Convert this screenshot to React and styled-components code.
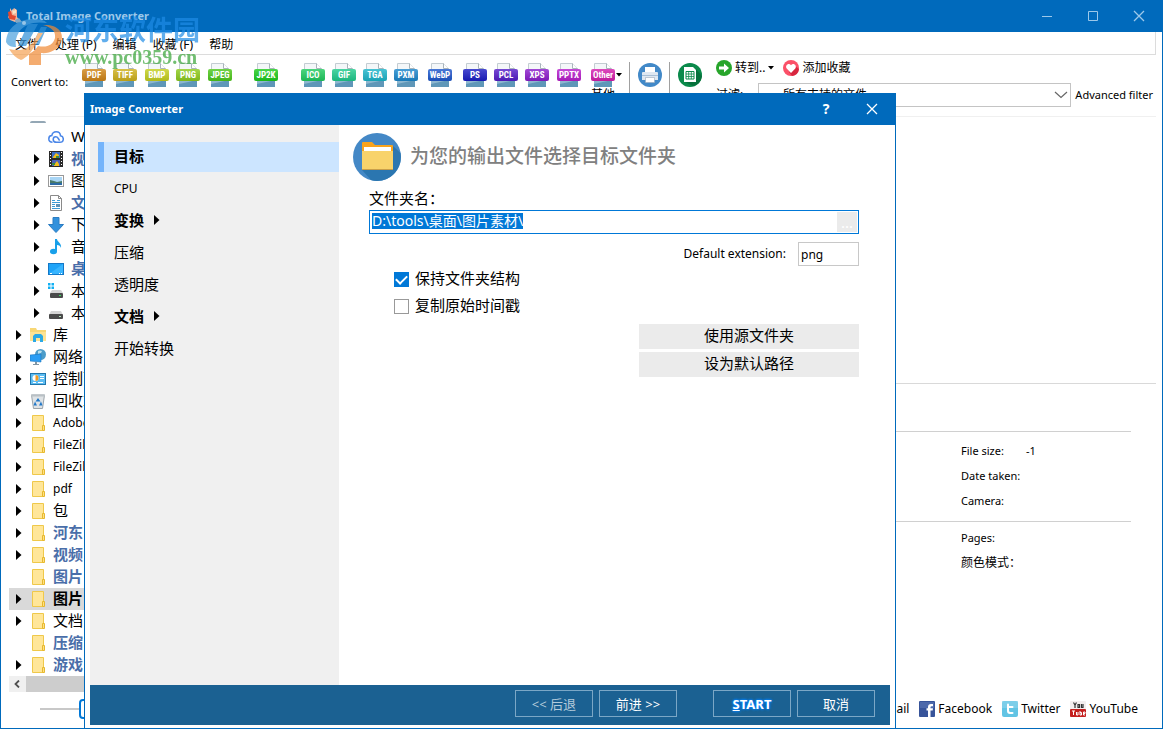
import React, { useEffect, useRef, useState } from "react";
import styled, { createGlobalStyle, css } from "styled-components";

const BLUE = "#006abc";

const FORMATS = [
  { name: "PDF", color: "#d08416", width: 31 },
  { name: "TIFF", color: "#ceb01a", width: 32 },
  { name: "BMP", color: "#c3cf1c", width: 31 },
  { name: "PNG", color: "#8ccb1c", width: 32 },
  { name: "JPEG", color: "#4cc81a", width: 46 },
  { name: "JP2K", color: "#1ccb1c", width: 47 },
  { name: "ICO", color: "#1fca5e", width: 31 },
  { name: "GIF", color: "#1fca8c", width: 31 },
  { name: "TGA", color: "#1bb4c9", width: 31 },
  { name: "PXM", color: "#1b86cb", width: 34 },
  { name: "WebP", color: "#1c56cb", width: 35 },
  { name: "PS", color: "#1a1cc4", width: 31 },
  { name: "PCL", color: "#541cc8", width: 31 },
  { name: "XPS", color: "#8a1ccb", width: 32 },
  { name: "PPTX", color: "#b71ccb", width: 34 },
  { name: "Other", label: "其他", color: "#d41cac", width: 38, menu: true },
];

const TREE = [
  { icon: "computer" },
  { icon: "cloud", text: "WPS网盘", level: 1 },
  { icon: "video", text: "视频", level: 1, arrow: true, marked: true },
  { icon: "picture", text: "图片", level: 1, arrow: true },
  { icon: "document", text: "文档", level: 1, arrow: true, marked: true },
  { icon: "download", text: "下载", level: 1, arrow: true },
  { icon: "music", text: "音乐", level: 1, arrow: true },
  { icon: "desktop", text: "桌面", level: 1, arrow: true, marked: true },
  { icon: "system", text: "本地磁盘", level: 1, arrow: true },
  { icon: "disk", text: "本地磁盘", level: 1, arrow: true },
  { icon: "library", text: "库", arrow: true },
  { icon: "network", text: "网络", arrow: true },
  { icon: "control", text: "控制面板", arrow: true },
  { icon: "recycle", text: "回收站", arrow: true },
  { icon: "folder", text: "Adobe", arrow: true },
  { icon: "folder", text: "FileZilla", arrow: true },
  { icon: "folder", text: "FileZilla", arrow: true },
  { icon: "folder", text: "pdf", arrow: true },
  { icon: "folder", text: "包", arrow: true },
  { icon: "folder", text: "河东", arrow: true, marked: true },
  { icon: "folder", text: "视频", arrow: true, marked: true },
  { icon: "folder", text: "图片", marked: true },
  { icon: "folder", text: "图片", arrow: true, selected: true },
  { icon: "folder", text: "文档", arrow: true },
  { icon: "folder", text: "压缩", marked: true },
  { icon: "folder", text: "游戏", arrow: true, marked: true },
];

const STEPS = [
  { text: "目标", bold: true },
  { text: "CPU", latin: true },
  { text: "变换", bold: true, arrow: true },
  { text: "压缩" },
  { text: "透明度" },
  { text: "文档", bold: true, arrow: true },
  { text: "开始转换" },
];

const drawings = {
  computer: (
    <>
      <rect x="1" y="2" width="14" height="9" fill="#3fa9f5" stroke="#7d8b98" />
      <path d="M0 16q0-2 2-2h12q2 0 2 2z" fill="#94a7b5" />
    </>
  ),
  cloud: (
    <g fill="none" stroke="#4a86e8" strokeWidth="1.5">
      <path d="M4.500 13.300C2.300 13.300.8 11.900.8 9.900c0-1.800 1.300-3.200 3-3.300C4.200 4.200 6 2.700 8.200 2.700c2.400 0 4.200 1.800 4.300 4.100 1.700.3 2.800 1.600 2.800 3.200 0 1.900-1.500 3.300-3.400 3.300H8.600C6.500 13.300 5.200 12 5.200 10.400c0-1.500 1.100-2.600 2.500-2.600 1.300 0 2 .7 2.600 1.700l1.300 2.200" />
    </g>
  ),
  video: (
    <>
      <rect x="1" y="0" width="14" height="16" fill="#2a2a2a" />
      <rect x="4" y="1" width="8" height="6" fill="#3d6fc9" />
      <rect x="4" y="9" width="8" height="6" fill="#4a5fb8" />
      <path d="M5 6l3-4 3 2v3H5zM6 14l3-4 2 3v2H6z" fill="#f2bd1d" />
      <path d="M8 5h3v2H8zM4 12h3v2H4z" fill="#3b8e41" />
      <path d="M2.500 1v15M13.500 1v15" stroke="#fff" strokeDasharray="1 2" />
    </>
  ),
  picture: (
    <>
      <rect x=".5" y="2.500" width="15" height="11" fill="#fff" stroke="#999" />
      <rect x="2" y="4" width="12" height="8" fill="#a8d5f5" />
      <path d="M2 7l4 1 3 1 5-1v4H2z" fill="#48796a" />
      <path d="M2 10h12v2H2z" fill="#2c6aa5" />
    </>
  ),
  document: (
    <>
      <path d="M2.500.5h8l3 3v12h-11z" fill="#fff" stroke="#8a8a8a" />
      <path d="M10.500.5v3h3" fill="none" stroke="#8a8a8a" />
      <path d="M4 5.500h3M4 7.500h8M4 9.500h3M4 11.500h3M4 13.500h8M9 5.500h3" stroke="#3c9bd6" />
      <rect x="8" y="9" width="4" height="3" fill="#5f92b7" />
    </>
  ),
  download: <path d="M5 .5h6v7h4.500L8 15.500.5 7.500H5z" fill="#3291dc" stroke="#2b7cc2" />,
  music: (
    <>
      <path d="M7 0h2c0 3 5 4 4 9-.4-2-2-3-4-3v6H7z" fill="#18a0ea" />
      <ellipse cx="5.500" cy="12.500" rx="3.500" ry="2.800" fill="#18a0ea" />
    </>
  ),
  desktop: (
    <>
      <rect x=".5" y="2.500" width="15" height="11" fill="#1fa4f8" stroke="#1478c7" />
      <path d="M1 13l14-10v10z" fill="#38b5ff" />
      <path d="M2 12.500h2M11 12.500h1M13 12.500h1" stroke="#fff" />
    </>
  ),
  system: (
    <>
      <path d="M0 0h2.500v2.500H0zM3.500 0H6v2.500H3.500zM0 3.500h2.500V6H0zM3.500 3.500H6V6H3.500z" fill="#12b0f3" />
      <path d="M4 7h9l2 3H2z" fill="#d5d5d5" />
      <rect x="2" y="10" width="13" height="5" rx="1" fill="#4b4b4b" />
      <rect x="11" y="12" width="2" height="1" fill="#38e05d" />
    </>
  ),
  disk: (
    <>
      <path d="M3 6h10l2 4H1z" fill="#d5d5d5" />
      <rect x="1" y="9" width="14" height="5" rx="1" fill="#4b4b4b" />
      <rect x="11" y="11" width="2" height="1" fill="#b9e8c1" />
    </>
  ),
  library: (
    <>
      <path d="M0 1h6l1 2h9v11H0z" fill="#f8d775" />
      <path d="M0 5h16v9H0z" fill="#fde394" />
      <path d="M3 15V9l2-2h6l2 2v6h-3v-4H6v4z" fill="#2ca9e5" />
    </>
  ),
  network: (
    <>
      <circle cx="10.500" cy="5.500" r="5.500" fill="#4c9cc9" />
      <path d="M8 2q2-1 4 0l-1 2-3 1z" fill="#b8dfee" />
      <path d="M0 6l11-1v8l-11-1z" fill="#2a9df4" stroke="#1d76bd" strokeWidth=".6" />
      <path d="M5 13h2v2h2v1H3v-1h2z" fill="#8195a3" />
    </>
  ),
  control: (
    <>
      <rect x=".5" y="2.500" width="15" height="11" fill="#5dbdf2" stroke="#2177ad" />
      <circle cx="5.500" cy="7" r="3" fill="#fff" />
      <path d="M5.500 7V4a3 3 0 0 1 0 6z" fill="#f39a21" />
      <path d="M10 5.500h4M10 7.500h4M3 11.500h3M8 11.500h5" stroke="#fff" />
    </>
  ),
  recycle: (
    <>
      <path d="M1.500 2h13l-2 13.500h-9z" fill="#dfe3e6" stroke="#9ca4aa" />
      <path d="M1 1.500h14v2H1z" fill="#b9c0c5" />
      <path d="M8 5l2.500 3.500h-5zM5 8.500l2 4H3.500zM11 8.500l1.500 4H9z" fill="#2278c8" />
    </>
  ),
  folder: (
    <>
      <path d="M2.500.5h11v15h-11z" fill="#ffe699" stroke="#efc84a" />
      <path d="M12.500 10.500h2v5h-2z" fill="#ffe082" stroke="#e6b82f" />
    </>
  ),
};

const TreeIcon = ({ name }) => (
  <svg width="16" height="16" viewBox="0 0 16 16" aria-hidden="true">
    {drawings[name]}
  </svg>
);

const Cross = () => (
  <svg width="12" height="12" viewBox="0 0 12 12" aria-hidden="true">
    <path d="M1 1l10 10M11 1L1 11" stroke="currentColor" strokeWidth="1.300" />
  </svg>
);

const AppLogo = () => (
  <svg width="16" height="16" viewBox="0 0 16 16" aria-hidden="true">
    <path d="M3 0l2 3 2-3 3 2v7l2 3-4 2-5-2-2-3 2-3z" fill="#f3b49a" />
    <path d="M1 4l3-1 1 4 4 1-1 4-6-1z" fill="#e4482f" />
    <path d="M5 1l2 2 2-2v4l-3 1z" fill="#fbe3c4" />
    <path d="M8 12l4-2 3 4-6 1z" fill="#7fa6c4" />
  </svg>
);

const FormatIcon = () => (
  <svg width="24" height="24" viewBox="0 0 24 24" aria-hidden="true">
    <path d="M3.500.5h12l5 5v7h-17z" fill="#f4f7f9" stroke="#c3ccd2" />
    <path d="M15.500.5v5h5" fill="#fff" stroke="#a9b4bb" />
    <path d="M3 16h18v8H3z" fill="#8db6cf" />
    <path d="M3 21l18-4v7H3z" fill="#5f97b8" />
  </svg>
);

const PrinterIcon = () => (
  <svg width="24" height="24" viewBox="0 0 24 24" aria-hidden="true">
    <circle cx="12" cy="12" r="12" fill="#4289c8" />
    <path d="M7 4h10v5H7z" fill="#fff" />
    <path d="M4 10q0-1 1-1h14q1 0 1 1v7H4z" fill="#dfe8f1" />
    <path d="M4 12h16v1H4z" fill="#a9bfd5" />
    <path d="M7.500 14.500h9v5h-9z" fill="#fff" stroke="#9ab" strokeWidth=".6" />
  </svg>
);

const ReportIcon = () => (
  <svg width="24" height="24" viewBox="0 0 24 24" aria-hidden="true">
    <circle cx="12" cy="12" r="12" fill="#0b8a4b" />
    <path d="M18 6l6 7a12 12 0 0 1-9 10l-8-4z" fill="#07713c" />
    <path d="M6 4h9l3 3v12H6z" fill="#fff" />
    <path d="M8 8.500h8v7.500H8z" fill="none" stroke="#0b8a4b" />
    <path d="M8 11h8M8 13.500h8M10.700 9v7M13.300 9v7" stroke="#0b8a4b" strokeWidth=".8" />
  </svg>
);

const GoIcon = () => (
  <svg width="16" height="16" viewBox="0 0 16 16" aria-hidden="true">
    <circle cx="8" cy="8" r="8" fill="#27a52b" />
    <path d="M3 6.500h5V3.500L13 8l-5 4.500v-3H3z" fill="#fff" />
  </svg>
);

const HeartIcon = () => (
  <svg width="16" height="16" viewBox="0 0 16 16" aria-hidden="true">
    <circle cx="8" cy="8" r="8" fill="#fb5068" />
    <path d="M12 6l4 3a8 8 0 0 1-7 7l-3-4z" fill="#d8263f" />
    <path d="M8 13L3.700 8.600C1.600 5.500 5.800 2.300 8 5.300c2.200-3 6.400.2 4.300 3.300z" fill="#fff" />
  </svg>
);

const FolderBadge = () => (
  <svg width="48" height="48" viewBox="0 0 48 48" aria-hidden="true">
    <circle cx="24" cy="24" r="24" fill="#4488c6" />
    <path d="M40 13l7.500 7A24 24 0 0 1 24 48a24 24 0 0 1-6-1L9 37z" fill="#2b76b0" />
    <path d="M9 10q0-1 1-1h9l3 3h17q1 0 1 1v12H9z" fill="#f9a31c" />
    <path d="M11 14h27v5H11z" fill="#fff" />
    <path d="M9 18h31v18H9z" fill="#f8d36b" />
    <path d="M9 36h31v1H9z" fill="#c89f4a" />
  </svg>
);

const FacebookIcon = () => (
  <svg width="16" height="16" viewBox="0 0 16 16" aria-hidden="true">
    <rect width="16" height="16" rx="1" fill="#37549a" />
    <path d="M1 1h14v6H1z" fill="#4d69ab" />
    <path d="M9 16V9.500H7.500V7.300H9V6q0-3 3-3h2v2.200h-1.300q-1.200 0-1.200 1v1.100H14l-.3 2.200h-2.200V16z" fill="#fff" />
  </svg>
);

const TwitterIcon = () => (
  <svg width="16" height="16" viewBox="0 0 16 16" aria-hidden="true">
    <rect width="16" height="16" rx="2" fill="#62c4e4" />
    <path d="M0 0h16v7H0z" fill="#8ed6ec" opacity=".6" />
    <path d="M5 3.500q0-1 1-1t1 1V5h3.500q1 0 1 1t-1 1H7v2.500q0 1.500 1.500 1.500h2q1 0 1 1t-1 1H8q-3 0-3-3z" fill="#fff" />
  </svg>
);

const YoutubeIcon = () => (
  <svg width="16" height="16" viewBox="0 0 16 16" aria-hidden="true">
    <rect width="16" height="16" rx="1" fill="#f3eeee" />
    <path d="M3.500 1.500L5 4l1.500-2.500M5 4v3M8 3.500h1.500v3H8zM11.500 3v3.500H13V3" fill="none" stroke="#333" strokeWidth="1.200" />
    <rect y="8" width="16" height="8" rx="1" fill="#c4201f" />
    <path d="M2 10h3M3.500 10v4M6.500 11v3H8v-3M10 10v4h1.500v-2.500H10M15 14h-1.500v-3H15v1.500h-1.500" fill="none" stroke="#fff" />
  </svg>
);

const SiteLogo = () => (
  <svg width="60" height="50" viewBox="0 0 60 50" aria-hidden="true">
    <path d="M1 27C2 12 14 4 29 4c6 0 10 1 13 4-12-2-23 1-28 9-3 5-4 10-3 15-5 0-8-1-10-5z" fill="#4aa0dd" />
    <path d="M23 9h10L21 31h-8zM36 12h6l-8 18h-7z" fill="#2f8fd6" />
    <path d="M4 34c12 3 20 0 26-10l3-6h5l-9 14c-4 7-8 11-13 13-5-2-9-6-12-11z" fill="#f6a253" />
    <path d="M38 10c14-1 22 7 18 17-3 8-12 12-20 11v12H24V39c4-2 7-5 9-8 9 2 15-1 17-8 1-7-4-11-12-13z" fill="#f08a35" />
    <circle cx="19" cy="8" r="2" fill="#d8ecfa" />
  </svg>
);

const Tree = () => (
  <TreeView>
    {TREE.map((node, i) => (
      <TreeRow key={i} $level={node.level || 0} $marked={node.marked} $selected={node.selected}>
        <Expander>{node.arrow && <RightArrow />}</Expander>
        <TreeIcon name={node.icon} />
        {node.text && <TreeText $latin={/^[A-Za-z]+$/.test(node.text)}>{node.text}</TreeText>}
      </TreeRow>
    ))}
  </TreeView>
);

const RightArrow = () => (
  <svg width="6" height="10" viewBox="0 0 6 10" aria-hidden="true">
    <path d="M0 0l5.500 5L0 10z" fill="#000" />
  </svg>
);

const DownArrow = () => (
  <svg width="6" height="4" viewBox="0 0 6 4" aria-hidden="true">
    <path d="M0 0h6L3 3.500z" fill="#000" />
  </svg>
);

const ConverterDialog = () => {
  const folder = useRef(null);
  const [keep, setKeep] = useState(true);
  const [stamp, setStamp] = useState(false);

  useEffect(() => {
    folder.current.focus();
    folder.current.select();
  }, []);

  return (
    <Dialog role="dialog" aria-labelledby="dialog-title">
      <DialogTitle>
        <h2 id="dialog-title">Image Converter</h2>
        <DialogControl type="button">?</DialogControl>
        <DialogControl type="button" aria-label="Close">
          <Cross />
        </DialogControl>
      </DialogTitle>
      <DialogBody>
        <Steps>
          {STEPS.map((step, i) => (
            <Step key={step.text} type="button" $active={i === 0} $bold={step.bold} $latin={step.latin}>
              {step.text}
              {step.arrow && <RightArrow />}
            </Step>
          ))}
        </Steps>
        <Page>
          <PageHead>
            <FolderBadge />
            <h1>为您的输出文件选择目标文件夹</h1>
          </PageHead>
          <Form>
            <FieldLabel htmlFor="folder">文件夹名：</FieldLabel>
            <PathBox>
              <PathInput id="folder" ref={folder} defaultValue="D:\tools\桌面\图片素材\" spellCheck="false" />
              <Browse type="button">...</Browse>
            </PathBox>
            <ExtensionRow>
              <label htmlFor="extension">Default extension:</label>
              <ExtensionInput id="extension" defaultValue="png" />
            </ExtensionRow>
            <Check>
              <input type="checkbox" checked={keep} onChange={() => setKeep(!keep)} />
              <span>保持文件夹结构</span>
            </Check>
            <Check>
              <input type="checkbox" checked={stamp} onChange={() => setStamp(!stamp)} />
              <span>复制原始时间戳</span>
            </Check>
            <SideButtons>
              <FlatButton type="button">使用源文件夹</FlatButton>
              <FlatButton type="button">设为默认路径</FlatButton>
            </SideButtons>
          </Form>
        </Page>
      </DialogBody>
      <DialogFooter>
        <FooterGroup>
          <FooterButton type="button" $dim>
            &lt;&lt; 后退
          </FooterButton>
          <FooterButton type="button">前进 &gt;&gt;</FooterButton>
        </FooterGroup>
        <FooterGroup>
          <FooterButton type="button" $start>
            <u>S</u>TART
          </FooterButton>
          <FooterButton type="button">取消</FooterButton>
        </FooterGroup>
      </DialogFooter>
    </Dialog>
  );
};

const App = () => {
  const [zoom, setZoom] = useState(36);

  return (
    <>
      <GlobalStyle />
      <Window>
        <TitleBar>
          <AppLogo />
          <AppTitle>Total Image Converter</AppTitle>
          <WindowControl type="button" aria-label="Minimize">
            <svg width="12" height="12" viewBox="0 0 12 12">
              <path d="M1 6.500h10" stroke="currentColor" />
            </svg>
          </WindowControl>
          <WindowControl type="button" aria-label="Maximize">
            <svg width="12" height="12" viewBox="0 0 12 12">
              <path d="M1.500 1.500h9v9h-9z" fill="none" stroke="currentColor" />
            </svg>
          </WindowControl>
          <WindowControl type="button" aria-label="Close">
            <Cross />
          </WindowControl>
        </TitleBar>
        <Content>
          <MenuBar>
            <MenuItem type="button">文件</MenuItem>
            <MenuItem type="button">处理 (P)</MenuItem>
            <MenuItem type="button">编辑</MenuItem>
            <MenuItem type="button">收藏 (F)</MenuItem>
            <MenuItem type="button">帮助</MenuItem>
          </MenuBar>
          <Toolbar>
            <ConvertLabel>Convert to:</ConvertLabel>
            {FORMATS.map((format) => (
              <FormatButton key={format.name} type="button" $width={format.width}>
                <FormatFace>
                  <FormatIcon />
                  <Band $color={format.color}>{format.name}</Band>
                  {format.menu && (
                    <MenuMark>
                      <DownArrow />
                    </MenuMark>
                  )}
                </FormatFace>
                <ToolLabel $latin={!format.label}>{format.label || format.name}</ToolLabel>
              </FormatButton>
            ))}
            <Separator />
            <ToolButton type="button">
              <PrinterIcon />
              <ToolLabel $latin>Print</ToolLabel>
            </ToolButton>
            <Separator />
            <ToolButton type="button">
              <ReportIcon />
              <ToolLabel $latin>Report</ToolLabel>
            </ToolButton>
            <FilterArea>
              <Shortcuts>
                <Shortcut type="button">
                  <GoIcon />
                  转到..
                  <DownArrow />
                </Shortcut>
                <Shortcut type="button">
                  <HeartIcon />
                  添加收藏
                </Shortcut>
              </Shortcuts>
              <FilterRow>
                <FilterLabel htmlFor="filter">过滤:</FilterLabel>
                <FilterBox>
                  <select id="filter">
                    <option>所有支持的文件</option>
                  </select>
                  <svg width="14" height="8" viewBox="0 0 14 8" aria-hidden="true">
                    <path d="M1 1l6 5.500L13 1" fill="none" stroke="#666" strokeWidth="1.200" />
                  </svg>
                </FilterBox>
                <AdvancedButton type="button">Advanced filter</AdvancedButton>
              </FilterRow>
            </FilterArea>
          </Toolbar>
          <Panes>
            <LeftPane>
              <Tree />
              <ScrollBar>
                <button type="button" aria-label="Scroll left">
                  <svg width="7" height="8" viewBox="0 0 7 8">
                    <path d="M5 .5L1.500 4 5 7.500" fill="none" stroke="#505050" strokeWidth="1.800" />
                  </svg>
                </button>
              </ScrollBar>
            </LeftPane>
            <InfoPane>
              <Preview />
              <Info>
                <InfoSection>
                  <dt>File size:</dt>
                  <dd>-1</dd>
                  <dt>Date taken:</dt>
                  <dt>Camera:</dt>
                </InfoSection>
                <InfoSection $tight>
                  <dt>Pages:</dt>
                  <WideTerm>颜色模式：</WideTerm>
                </InfoSection>
              </Info>
            </InfoPane>
          </Panes>
          <StatusBar>
            <ZoomSlider
              type="range"
              aria-label="Thumbnail size"
              value={zoom}
              onChange={(e) => setZoom(Number(e.target.value))}
            />
            <Links>
              <a href="#email">E-mail</a>
              <a href="#facebook">
                <FacebookIcon />
                Facebook
              </a>
              <a href="#twitter">
                <TwitterIcon />
                Twitter
              </a>
              <a href="#youtube">
                <YoutubeIcon />
                YouTube
              </a>
            </Links>
          </StatusBar>
        </Content>
        <ConverterDialog />
        <Watermark>
          <SiteLogo />
          <div>
            <SiteName>河东软件园</SiteName>
            <SiteUrl>www.pc0359.cn</SiteUrl>
          </div>
        </Watermark>
      </Window>
    </>
  );
};

export default App;

const GlobalStyle = createGlobalStyle`
  * {
    box-sizing: border-box;
  }

  body {
    margin: 0;
    background: #fff;
    color: #000;
    font-family: "Noto Sans", "Noto Sans CJK SC", sans-serif;
    font-size: 12px;
    line-height: 16px;
  }

  button, input, select {
    font: inherit;
    color: inherit;
  }

  button {
    padding: 0;
    border: 0;
    background: none;
    white-space: nowrap;
  }

  h1, h2, dl, dt, dd, ul {
    margin: 0;
    padding: 0;
  }

  svg {
    display: block;
    flex: none;
  }
`;

const Window = styled.div`
  position: relative;
  display: flex;
  flex-direction: column;
  height: 100vh;
  overflow: hidden;
  border: 1px solid ${BLUE};
  border-top: 0;
`;

const TitleBar = styled.header`
  display: flex;
  align-items: center;
  height: 32px;
  flex: none;
  padding-left: 6px;
  background: ${BLUE};
  color: #9cc8ea;
`;

const AppTitle = styled.span`
  flex: 1;
  padding-left: 3px;
  font-size: 11px;
  font-weight: 700;
`;

const WindowControl = styled.button`
  display: flex;
  align-items: center;
  justify-content: center;
  width: 46px;
  height: 32px;
`;

const Content = styled.main`
  display: flex;
  flex-direction: column;
  flex: 1;
  min-height: 0;
  padding: 0 6px 0 5px;
`;

const MenuBar = styled.nav`
  display: flex;
  height: 23px;
  flex: none;
  padding: 3px 0 0 1px;
  border: 1px solid #dcdcdc;
  border-width: 0 1px 1px 0;
`;

const MenuItem = styled.button`
  padding: 0 8px;
`;

const Toolbar = styled.div`
  display: flex;
  height: 62px;
  flex: none;
  padding: 8px 3px 0 5px;
  border-bottom: 1px solid #f0f0f0;
`;

const ConvertLabel = styled.span`
  width: 71px;
  flex: none;
  padding-top: 11px;
  font-size: 11px;
`;

const FormatButton = styled.button`
  display: flex;
  flex-direction: column;
  align-items: flex-start;
  flex: none;
  width: ${(p) => p.$width}px;
`;

const FormatFace = styled.span`
  position: relative;
  width: 24px;
  height: 24px;
`;

const Band = styled.span`
  position: absolute;
  top: 6px;
  left: 0;
  width: 24px;
  height: 12px;
  border-radius: 2px;
  background: linear-gradient(rgba(255, 255, 255, 0.2), rgba(0, 0, 0, 0.1)) ${(p) => p.$color};
  color: #fff;
  font-family: "Liberation Sans Narrow", "Roboto Condensed", Roboto, sans-serif;
  font-size: 9px;
  font-weight: 700;
  line-height: 12px;
  text-align: center;
`;

const MenuMark = styled.span`
  position: absolute;
  top: 10px;
  left: 25px;
`;

const ToolLabel = styled.span`
  display: flex;
  justify-content: center;
  width: 24px;
  padding-top: ${(p) => (p.$latin ? 2 : 0)}px;
  font-size: ${(p) => (p.$latin ? 11 : 12)}px;
`;

const Separator = styled.span`
  width: 1px;
  flex: none;
  margin-top: -1px;
  background: #a0a0a0;
`;

const ToolButton = styled.button`
  display: flex;
  flex-direction: column;
  align-items: center;
  width: 39px;
  flex: none;
`;

const FilterArea = styled.div`
  flex: 1;
  min-width: 0;
  margin-top: -7px;
  padding-left: 7px;
`;

const Shortcuts = styled.div`
  display: flex;
  gap: 9px;
  height: 27px;
`;

const Shortcut = styled.button`
  display: flex;
  align-items: center;
  gap: 3px;
  height: 24px;
`;

const FilterRow = styled.div`
  display: flex;
  align-items: center;
`;

const FilterLabel = styled.label`
  width: 42px;
`;

const FilterBox = styled.div`
  position: relative;
  display: flex;
  align-items: center;
  flex: 1;
  height: 24px;
  padding-right: 2px;
  border: 1px solid #c4c4c4;

  select {
    flex: 1;
    height: 22px;
    padding: 0 24px;
    border: 0;
    background: none;
    appearance: none;
  }

  svg {
    pointer-events: none;
  }
`;

const AdvancedButton = styled.button`
  padding-left: 4px;
  font-size: 11px;
`;

const Panes = styled.div`
  display: flex;
  justify-content: space-between;
  flex: 1;
  min-height: 0;
`;

const LeftPane = styled.aside`
  display: flex;
  flex-direction: column;
  width: 240px;
  margin-left: 3px;
  padding-top: 3px;
`;

const TreeView = styled.ul`
  display: flex;
  flex-direction: column;
  justify-content: flex-end;
  flex: 1;
  min-height: 0;
  overflow: hidden;
  list-style: none;
`;

const TreeRow = styled.li`
  display: flex;
  align-items: center;
  height: 22px;
  flex: none;
  padding-left: ${(p) => 7 + p.$level * 18}px;
  white-space: nowrap;

  ${(p) =>
    p.$marked &&
    css`
      color: #4a6ea9;
      font-weight: 700;
    `}

  ${(p) =>
    p.$selected &&
    css`
      background: #d9d9d9;
      font-weight: 700;
    `}
`;

const Expander = styled.span`
  width: 14px;
`;

const TreeText = styled.span`
  padding: 0 0 ${(p) => (p.$latin ? 0 : 2)}px 7px;
  font-size: ${(p) => (p.$latin ? 12 : 15)}px;
`;

const ScrollBar = styled.div`
  display: flex;
  height: 16px;
  flex: none;
  background: #cdcdcd;

  button {
    display: flex;
    align-items: center;
    justify-content: center;
    width: 17px;
    background: #f0f0f0;
  }
`;

const InfoPane = styled.section`
  width: 284px;
`;

const Preview = styled.div`
  height: 267px;
  border-bottom: 1px solid #d9d9d9;
`;

const Info = styled.div`
  padding: 47px 25px 0 0;
`;

const InfoSection = styled.dl`
  display: grid;
  grid-template-columns: 65px 1fr;
  padding: ${(p) => (p.$tight ? 3 : 6)}px 0 8px 89px;
  border-top: 1px solid #d0d0d0;
  font-size: 11px;
  line-height: 25px;

  dt {
    grid-column: 1;
    white-space: nowrap;
  }
`;

const WideTerm = styled.dt`
  font-size: 12px;
`;

const StatusBar = styled.footer`
  display: flex;
  align-items: center;
  justify-content: space-between;
  height: 36px;
  flex: none;
  padding: 0 18px 2px 34px;
`;

const ZoomSlider = styled.input`
  width: 120px;
  height: 20px;
  margin: 0;
  appearance: none;
  background: linear-gradient(#c8c8c8, #c8c8c8) center / 100% 2px no-repeat;

  &::-webkit-slider-thumb {
    appearance: none;
    width: 12px;
    height: 20px;
    border: 2px solid #0078d7;
    border-radius: 4px;
    background: #fff;
  }
`;

const Links = styled.div`
  display: flex;
  gap: 10px;
  font-size: 12px;

  a {
    display: flex;
    align-items: center;
    gap: 3px;
    color: #000;
    text-decoration: none;
  }
`;

const Dialog = styled.section`
  position: absolute;
  top: 93px;
  right: 266px;
  bottom: -1px;
  left: 83px;
  display: flex;
  flex-direction: column;
  padding-bottom: 4px;
  border: 1px solid ${BLUE};
  border-width: 0 1px;
  background: #fff;
`;

const DialogTitle = styled.header`
  display: flex;
  align-items: center;
  height: 32px;
  flex: none;
  padding-left: 5px;
  background: ${BLUE};
  color: #fff;

  h2 {
    flex: 1;
    font-size: 11px;
  }
`;

const DialogControl = styled.button`
  display: flex;
  align-items: center;
  justify-content: center;
  width: 46px;
  height: 32px;
  font-size: 14px;
  font-weight: 700;
`;

const DialogBody = styled.div`
  display: flex;
  flex: 1;
  min-height: 0;
  padding: 0 5px;
`;

const Steps = styled.nav`
  display: flex;
  flex-direction: column;
  gap: 2px;
  width: 249px;
  flex: none;
  padding: 17px 0 0 8px;
  background: #f0f0f0;
`;

const Step = styled.button`
  display: flex;
  align-items: center;
  gap: 10px;
  height: 30px;
  padding: 0 0 ${(p) => (p.$latin ? 0 : 2)}px 10px;
  border-left: 6px solid ${(p) => (p.$active ? "#74b4fb" : "transparent")};
  background: ${(p) => (p.$active ? "#cce5ff" : "none")};
  font-size: ${(p) => (p.$latin ? 12 : 15)}px;
  font-weight: ${(p) => (p.$bold ? 700 : 400)};
`;

const Page = styled.div`
  flex: 1;
  padding: 8px 31px 0 14px;
`;

const PageHead = styled.div`
  display: flex;
  align-items: center;
  gap: 9px;

  h1 {
    padding-bottom: 2px;
    color: #808080;
    font-size: 19px;
    font-weight: 500;
    line-height: 24px;
  }
`;

const Form = styled.form`
  display: flex;
  flex-direction: column;
  padding: 8px 0 0 16px;
  font-size: 15px;
`;

const FieldLabel = styled.label`
  height: 21px;
  line-height: 19px;
`;

const PathBox = styled.div`
  display: flex;
  height: 24px;
  padding: 1px;
  border: 1px solid #0078d7;
`;

const PathInput = styled.input`
  flex: 1;
  min-width: 0;
  padding: 0 1px 2px;
  border: 0;
  outline: 0;
  font-size: 14px;

  &::selection {
    background: #0078d7;
    color: #fff;
  }
`;

const Browse = styled.button`
  width: 20px;
  background: #ebebeb;
  color: #fff;
`;

const ExtensionRow = styled.div`
  display: flex;
  align-items: center;
  justify-content: flex-end;
  gap: 12px;
  padding-top: 8px;
  font-size: 12px;
`;

const ExtensionInput = styled.input`
  width: 61px;
  height: 24px;
  padding: 0 2px;
  border: 1px solid #c8c8c8;
`;

const Check = styled.label`
  display: flex;
  align-items: center;
  align-self: flex-start;
  gap: 6px;
  height: 27px;
  padding-left: 25px;

  span {
    padding-bottom: 4px;
  }

  input {
    width: 15px;
    height: 15px;
    margin: 0;
    appearance: none;
    border: 1px solid #999;
    background: #fff;
  }

  input:checked {
    border-color: #0078d7;
    background: #0078d7;
  }

  input:checked::after {
    content: "";
    display: block;
    width: 5px;
    height: 9px;
    margin: 0 auto;
    border: solid #fff;
    border-width: 0 2px 2px 0;
    transform: rotate(45deg);
  }
`;

const SideButtons = styled.div`
  display: flex;
  flex-direction: column;
  align-self: flex-end;
  gap: 3px;
  width: 220px;
  padding-top: 4px;
`;

const FlatButton = styled.button`
  height: 25px;
  padding-bottom: 4px;
  background: #ebebeb;
`;

const DialogFooter = styled.footer`
  display: flex;
  align-items: center;
  justify-content: flex-end;
  gap: 36px;
  height: 40px;
  flex: none;
  margin: 0 5px;
  padding: 0 15px 3px 0;
  background: #1b6192;
`;

const FooterGroup = styled.div`
  display: flex;
  gap: 6px;
`;

const FooterButton = styled.button`
  width: 78px;
  height: 27px;
  border: 1px solid #7ba7c6;
  color: ${(p) => (p.$dim ? "#b3cbdb" : "#fff")};
  font-size: 13px;

  ${(p) =>
    p.$start &&
    css`
      font-weight: 700;
      text-shadow: 0 0 3px #0080ff, 0 0 3px #0080ff, 0 0 2px #0080ff;
    `}
`;

const Watermark = styled.div`
  position: absolute;
  top: 15px;
  left: 4px;
  display: flex;
  opacity: 0.7;
  pointer-events: none;
`;

const SiteName = styled.div`
  color: #1f8ce6;
  font-size: 27px;
  font-weight: 700;
  line-height: 30px;
`;

const SiteUrl = styled.div`
  color: #36a336;
  font-family: "Liberation Serif", serif;
  font-size: 20px;
  font-weight: 700;
  line-height: 24px;
`;
